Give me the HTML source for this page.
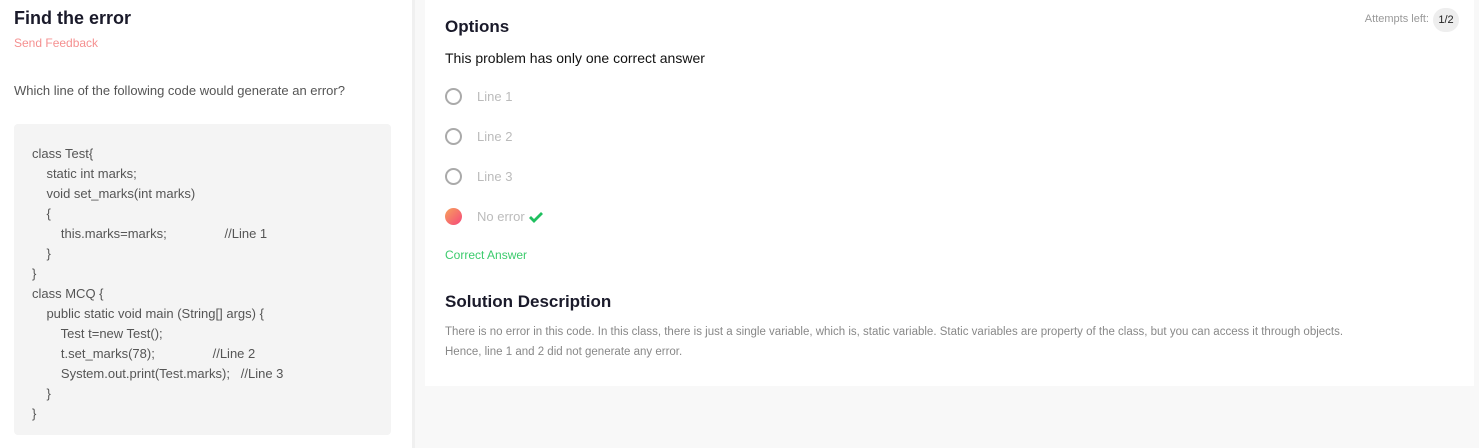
<!DOCTYPE html>
<html><head><style>
*{margin:0;padding:0;box-sizing:border-box}
body{width:1479px;height:448px;background:#f8f8f8;font-family:"Liberation Sans",sans-serif;position:relative;overflow:hidden}
.left{position:absolute;left:0;top:0;width:415px;height:448px;background:#fff;border-right:3px solid #f0f0f0}
h1{position:absolute;left:14px;top:8px;font-size:18px;font-weight:bold;color:#1a1a2a}
.fb{position:absolute;left:14px;top:36px;font-size:12px;color:#f59090}
.q{position:absolute;left:14px;top:83px;font-size:13px;color:#555}
.code{position:absolute;left:14px;top:124px;width:377px;height:311px;background:#f4f4f4;border-radius:4px;padding:20px 18px;font-size:13px;color:#555;line-height:20px;white-space:pre}
.card{position:absolute;left:425px;top:0;width:1049px;height:386px;background:#fff}
.t{position:absolute;font-size:17px;font-weight:bold;color:#1a1a2a}
.opt{position:absolute;left:20px;font-size:13px;color:#bbb;display:flex;align-items:center}
.r{width:17px;height:17px;border:2px solid #aaa;border-radius:50%;margin-right:15px}
</style></head><body>
<div class="left">
<h1>Find the error</h1>
<div class="fb">Send Feedback</div>
<div class="q">Which line of the following code would generate an error?</div>
<div class="code">class Test{
    static int marks;
    void set_marks(int marks)
    {
        this.marks=marks;                //Line 1
    }
}
class MCQ {
    public static void main (String[] args) {
        Test t=new Test();
        t.set_marks(78);                //Line 2
        System.out.print(Test.marks);   //Line 3
    }
}</div>
</div>
<div class="card">
<div class="t" style="left:20px;top:17px">Options</div>
<div style="position:absolute;right:45px;top:13px;font-size:11px;color:#999">Attempts left:</div>
<div style="position:absolute;right:15px;top:8px;width:26px;height:24px;border-radius:12px;background:#eee;font-size:11px;color:#222;text-align:center;line-height:24px">1/2</div>
<div style="position:absolute;left:20px;top:50px;font-size:14px;color:#111">This problem has only one correct answer</div>
<div class="opt" style="top:88px"><span class="r"></span>Line 1</div>
<div class="opt" style="top:128px"><span class="r"></span>Line 2</div>
<div class="opt" style="top:168px"><span class="r"></span>Line 3</div>
<div class="opt" style="top:208px"><span class="r" style="border:none;background:linear-gradient(135deg,#f7a35c,#f5477a)"></span>No error <svg width="14" height="12" viewBox="0 0 14 12" style="margin-left:4px"><path d="M1 6 L5 10 L13 2" stroke="#1fbf5f" stroke-width="2.8" fill="none"/></svg></div>
<div style="position:absolute;left:20px;top:248px;font-size:12px;color:#3ccb6d">Correct Answer</div>
<div class="t" style="left:20px;top:292px">Solution Description</div>
<div style="position:absolute;left:20px;top:322px;width:930px;font-size:11.5px;color:#888;line-height:20px">There is no error in this code. In this class, there is just a single variable, which is, static variable. Static variables are property of the class, but you can access it through objects. Hence, line 1 and 2 did not generate any error.</div>
</div>
</body></html>
